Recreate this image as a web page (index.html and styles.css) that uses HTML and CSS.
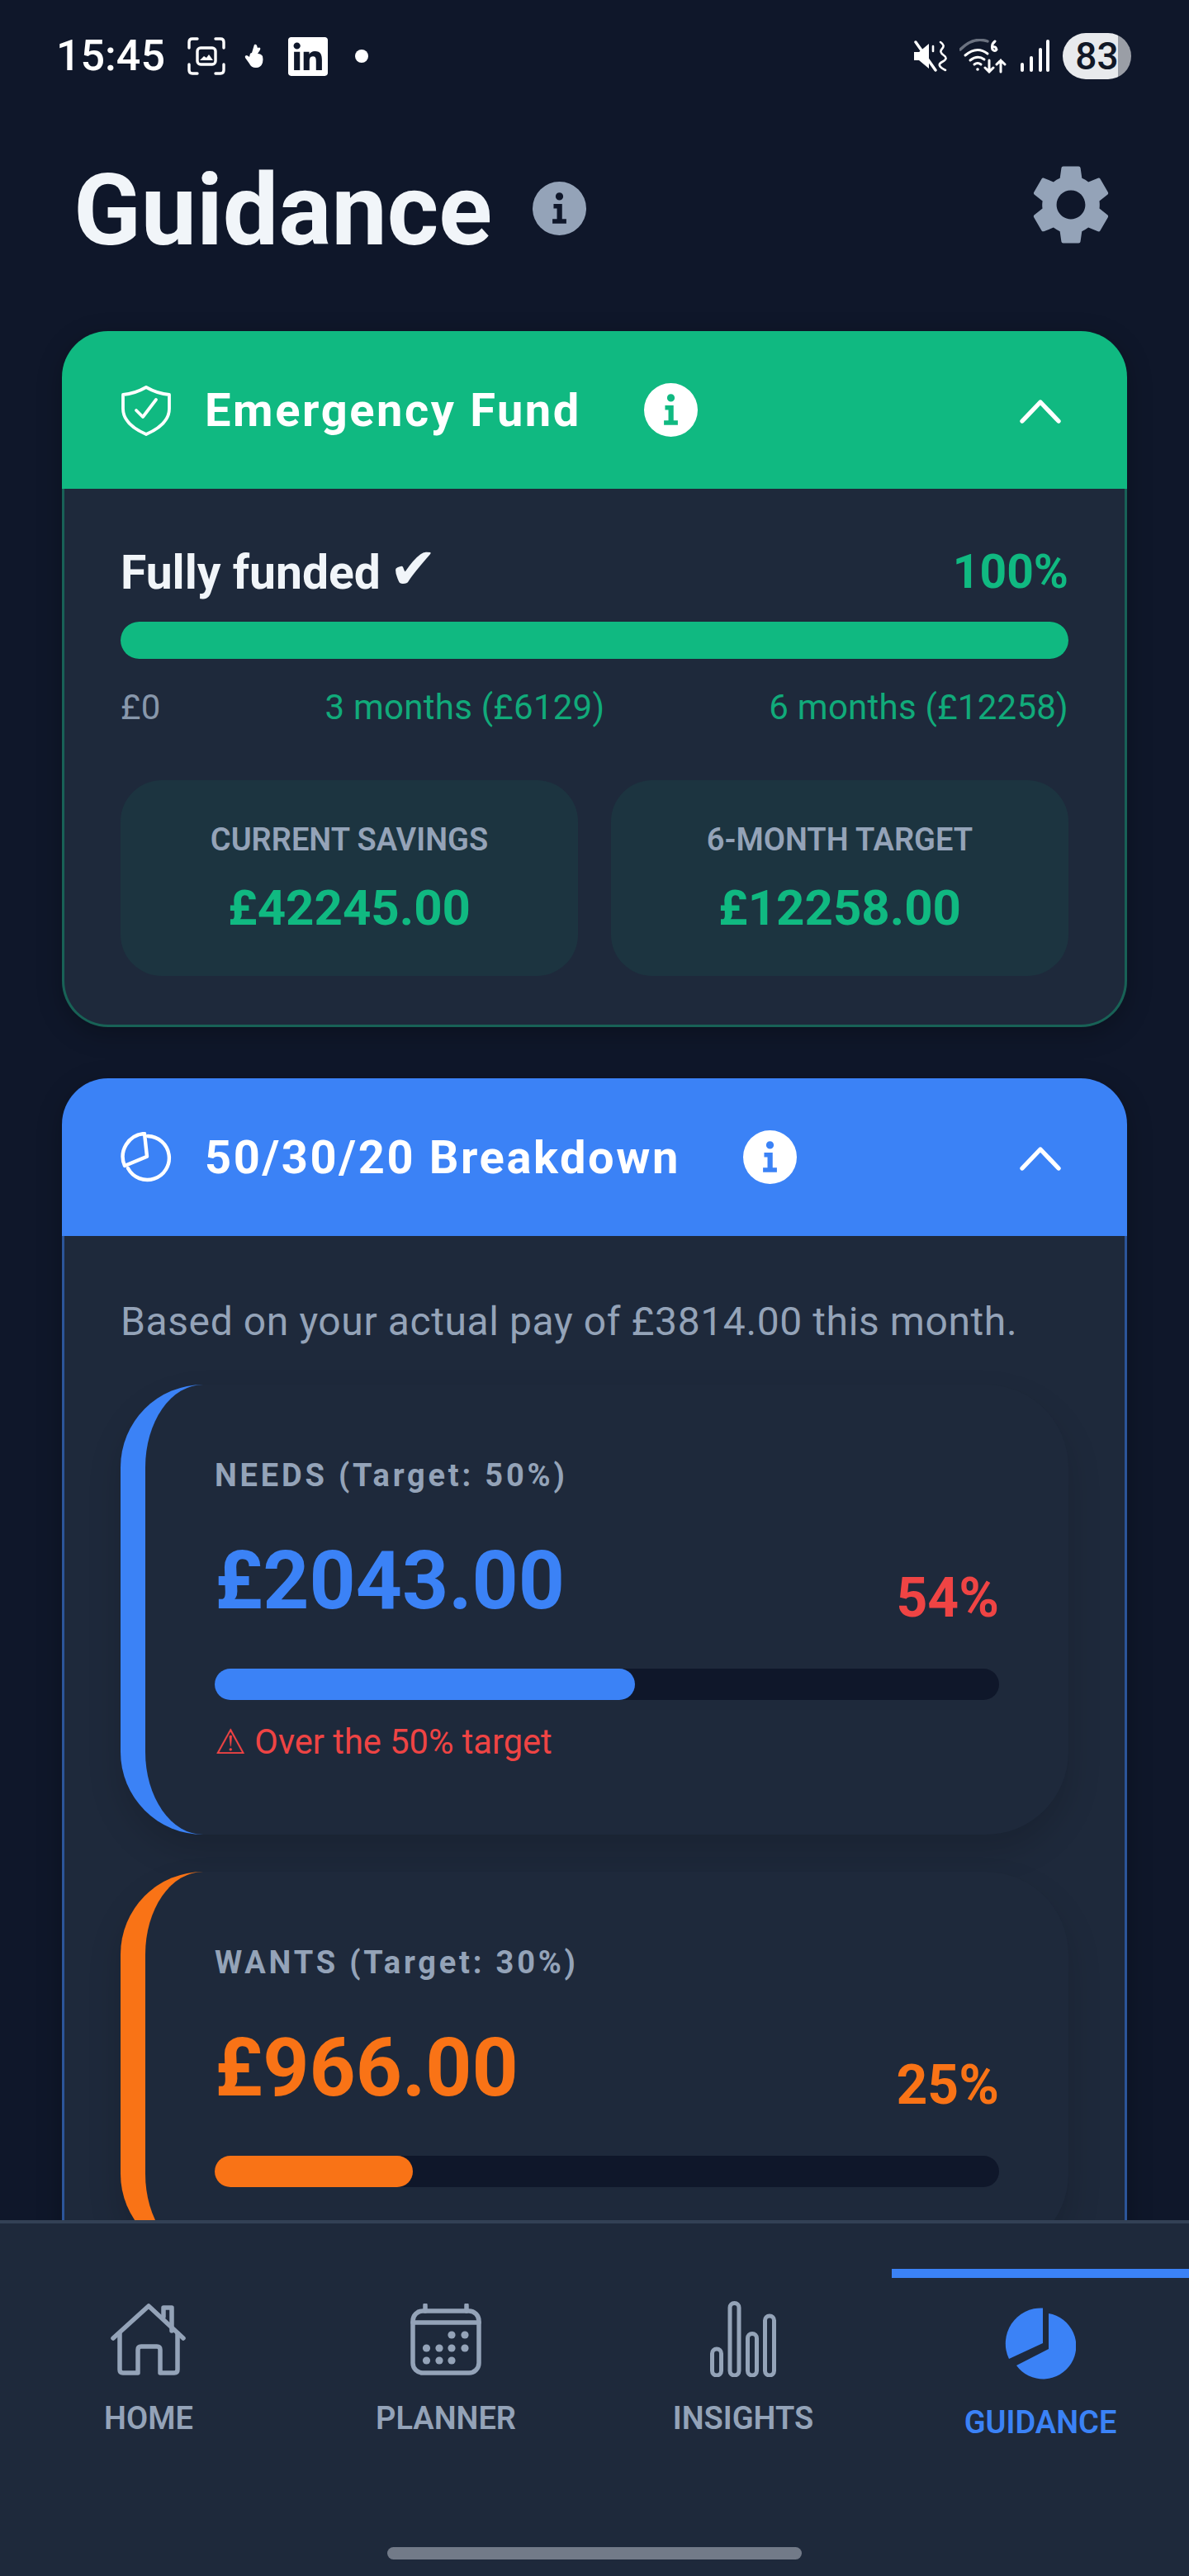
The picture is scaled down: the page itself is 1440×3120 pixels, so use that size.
FILE: index.html
```html
<!DOCTYPE html>
<html lang="en">
<head>
    <meta charset="UTF-8">
    <meta name="viewport" content="width=device-width, initial-scale=1.0">
    <title>Guidance</title>
    <link rel="stylesheet" href="styles.css">
</head>
<body>
    <svg class="defs" width="0" height="0">
        <symbol id="info" viewBox="0 0 24 24">
            <path fill-rule="evenodd" d="M12 0a12 12 0 1 0 0 24a12 12 0 1 0 0-24zM12 4.9a1.7 1.7 0 1 1 0 3.4a1.7 1.7 0 1 1 0-3.4zM9.4 10H13.2V16.7H15.1V18.7H8.9V16.7H10.9V12H9.4z"/>
        </symbol>
    </svg>

    <div class="phone">
        <div class="status-bar">
            <span class="time">15:45</span>
            <svg class="st-icon" width="46" height="46" viewBox="0 0 46 46" fill="none" stroke="#fff" stroke-width="3.4" stroke-linecap="round">
                <path d="M2 13V6q0-4 4-4h6M34 2h6q4 0 4 4v7M44 33v7q0 4-4 4h-6M12 44H6q-4 0-4-4v-7"/>
                <rect x="12" y="13" width="22" height="20" rx="4"/>
                <path d="M15 28l5-5 3 2 3-4 5 7z" fill="#fff" stroke="none"/>
            </svg>
            <svg class="st-icon st-hand" width="26" height="30" viewBox="0 0 26 30" fill="#fff">
                <path d="M12 1q2-1 3 1l1 3q2-1 3 0 1 1-1 4l-2 3q4 0 6 3 1 4 0 8-2 6-8 6-6 0-8-5L1 17q-1-2 1-3 2 0 4 2l1-4q1-1 2-1z"/>
            </svg>
            <svg class="st-icon" width="48" height="47" viewBox="0 0 24 24" preserveAspectRatio="none" fill="#fff">
                <path fill-rule="evenodd" d="M20.447 20.452h-3.554v-5.569c0-1.328-.027-3.037-1.852-3.037-1.853 0-2.136 1.445-2.136 2.939v5.667H9.351V9h3.414v1.561h.046c.477-.9 1.637-1.85 3.37-1.85 3.601 0 4.267 2.37 4.267 5.455v6.286zM5.337 7.433c-1.144 0-2.063-.926-2.063-2.065 0-1.138.92-2.063 2.063-2.063 1.14 0 2.064.925 2.064 2.063 0 1.139-.925 2.065-2.064 2.065zm1.782 13.019H3.555V9h3.564v11.452zM22.225 0H1.771C.792 0 0 .774 0 1.729v20.542C0 23.227.792 24 1.771 24h20.451C23.2 24 24 23.227 24 22.271V1.729C24 .774 23.2 0 22.222 0h.003z"/>
            </svg>
            <span class="st-dot"></span>

            <div class="status-right">
                <svg width="41" height="38" viewBox="0 0 41 38" fill="none" stroke="#fff" stroke-linecap="round">
                    <path d="M1 14h6L19 4v30L7 24H1z" fill="#fff" stroke="none"/>
                    <path d="M3 2l24 34" stroke-width="3.4"/>
                    <path d="M28 2q6 4 2 8t2 8-2 8 4 10" stroke-width="2.6" transform="translate(5 0)"/>
                    <path d="M24 7v6" stroke-width="2.6"/>
                </svg>
                <svg width="58" height="42" viewBox="0 0 58 42" fill="none" stroke="#fff" stroke-width="3" stroke-linecap="round">
                    <path d="M1 13Q17-3 34 3" stroke="#6b7280" stroke-width="3.4"/>
                    <path d="M7 20q14-12 27-2M13 26q9-7 17-1M18 31q4-3 8 0"/>
                    <circle cx="22" cy="37" r="1.8" fill="#fff" stroke="none"/>
                    <path d="M43 3q-5 4-3 10 3 3 5 0-1-4-5-3M36 26v14M31 35l5 5 5-5M50 40V26M45 31l5-5 5 5"/>
                </svg>
                <svg width="37" height="40" viewBox="0 0 37 40" stroke="#fff" stroke-width="4" stroke-linecap="round">
                    <path d="M3 30v7M14 22v15M25 12v25M34 2v35"/>
                </svg>
                <div class="battery">83</div>
            </div>
        </div>

        <div class="scroll">
            <div class="title-row">
                <h1>Guidance</h1>
                <svg class="title-info"><use href="#info"/></svg>
                <svg class="gear" viewBox="0 0 24 24">
                    <path d="M19.14 12.94c.04-.3.06-.61.06-.94 0-.32-.02-.64-.07-.94l2.03-1.58a.49.49 0 0 0 .12-.61l-1.92-3.32a.488.488 0 0 0-.59-.22l-2.39.96c-.5-.38-1.03-.7-1.62-.94l-.36-2.54a.484.484 0 0 0-.48-.41h-3.84c-.24 0-.43.17-.47.41l-.36 2.54c-.59.24-1.13.57-1.62.94l-2.39-.96c-.22-.08-.47 0-.59.22L2.74 8.87c-.12.21-.08.47.12.61l2.03 1.58c-.05.3-.09.63-.09.94s.02.64.07.94l-2.03 1.58a.49.49 0 0 0-.12.61l1.92 3.32c.12.22.37.29.59.22l2.39-.96c.5.38 1.03.7 1.62.94l.36 2.54c.05.24.24.41.48.41h3.84c.24 0 .44-.17.47-.41l.36-2.54c.59-.24 1.13-.56 1.62-.94l2.39.96c.22.08.47 0 .59-.22l1.92-3.32c.12-.22.07-.47-.12-.61l-2.01-1.58zM12 15.6c-1.98 0-3.6-1.62-3.6-3.6s1.62-3.6 3.6-3.6 3.6 1.62 3.6 3.6-1.62 3.6-3.6 3.6z"/>
                </svg>
            </div>

            <!-- Emergency Fund -->
            <div class="card card-green">
                <div class="card-header">
                    <svg class="head-icon" viewBox="0 0 62 62" fill="none" stroke="#fff" stroke-width="3.8" stroke-linecap="round" stroke-linejoin="round">
                        <path d="M31 3Q45 11 59 12V29C59 43 47 53 31 60C15 53 3 43 3 29V12Q17 11 31 3Z"/>
                        <path d="M19 31l8 8 16-21"/>
                    </svg>
                    <span class="card-title">Emergency Fund</span>
                    <svg class="head-info"><use href="#info"/></svg>
                    <svg class="chevron" viewBox="0 0 60 36" fill="none" stroke="#fff" stroke-width="5.4" stroke-linecap="round" stroke-linejoin="round">
                        <path d="M8 31L30 8l22 23"/>
                    </svg>
                </div>
                <div class="card-body fund-body">
                    <div class="fund-row">
                        <span class="fund-status">Fully funded <span class="tick">✔</span></span>
                        <span class="fund-pct">100%</span>
                    </div>
                    <div class="fund-track"><div class="fund-fill"></div></div>
                    <div class="fund-scale">
                        <span class="scale-zero">£0</span>
                        <span>3 months (£6129)</span>
                        <span>6 months (£12258)</span>
                    </div>
                    <div class="stats">
                        <div class="stat">
                            <div class="stat-label">CURRENT SAVINGS</div>
                            <div class="stat-value">£42245.00</div>
                        </div>
                        <div class="stat">
                            <div class="stat-label">6-MONTH TARGET</div>
                            <div class="stat-value">£12258.00</div>
                        </div>
                    </div>
                </div>
            </div>

            <!-- Breakdown -->
            <div class="card card-blue">
                <div class="card-header">
                    <svg class="head-icon" viewBox="0 0 62 62" fill="none" stroke="#fff" stroke-width="4.4" stroke-linejoin="round" stroke-linecap="round">
                        <path d="M29 2A28 28 0 0 0 5 41L32 29.7z"/>
                        <path d="M33 5A26.5 26.5 0 1 1 9 44"/>
                    </svg>
                    <span class="card-title">50/30/20 Breakdown</span>
                    <svg class="head-info"><use href="#info"/></svg>
                    <svg class="chevron" viewBox="0 0 60 36" fill="none" stroke="#fff" stroke-width="5.4" stroke-linecap="round" stroke-linejoin="round">
                        <path d="M8 31L30 8l22 23"/>
                    </svg>
                </div>
                <div class="card-body breakdown-body">
                    <p class="based">Based on your actual pay of £3814.00 this month.</p>

                    <div class="bucket bucket-needs">
                        <div class="bucket-label">NEEDS (Target: 50%)</div>
                        <div class="bucket-row">
                            <span class="bucket-value">£2043.00</span>
                            <span class="bucket-pct pct-over">54%</span>
                        </div>
                        <div class="bucket-track"><div class="bucket-fill" style="width: 53.6%"></div></div>
                        <div class="bucket-warn">⚠ Over the 50% target</div>
                    </div>

                    <div class="bucket bucket-wants">
                        <div class="bucket-label">WANTS (Target: 30%)</div>
                        <div class="bucket-row">
                            <span class="bucket-value">£966.00</span>
                            <span class="bucket-pct">25%</span>
                        </div>
                        <div class="bucket-track"><div class="bucket-fill" style="width: 25.3%"></div></div>
                    </div>
                </div>
            </div>
        </div>

        <div class="bottom-nav">
            <div class="tabs">
                <div class="tab">
                    <div class="tab-icon">
                        <svg width="92" height="87" viewBox="0 0 92 87" fill="none" stroke="#94a3b8" stroke-width="5.5" stroke-linecap="round" stroke-linejoin="round">
                            <path d="M3 42L46 3l42 39"/>
                            <path d="M11 36V80q0 4 4 4H33V56q0-4 4-4H56q4 0 4 4V84H77q4 0 4-4V36"/>
                            <path d="M64 16V5H74V33"/>
                        </svg>
                    </div>
                    <div class="tab-label">HOME</div>
                </div>
                <div class="tab">
                    <div class="tab-icon">
                        <svg width="86" height="87" viewBox="0 0 86 87" fill="none" stroke="#94a3b8" stroke-width="5.5" stroke-linecap="round">
                            <rect x="3" y="9" width="80" height="75" rx="12"/>
                            <path d="M3 23H83M18 2v7M68 2v7"/>
                            <g fill="#94a3b8" stroke="none">
                                <circle cx="50" cy="38" r="4.6"/><circle cx="66" cy="38" r="4.6"/>
                                <circle cx="19.5" cy="54" r="4.6"/><circle cx="35" cy="54" r="4.6"/><circle cx="50" cy="54" r="4.6"/><circle cx="66" cy="54" r="4.6"/>
                                <circle cx="19.5" cy="69" r="4.6"/><circle cx="35" cy="69" r="4.6"/><circle cx="50" cy="69" r="4.6"/>
                            </g>
                        </svg>
                    </div>
                    <div class="tab-label">PLANNER</div>
                </div>
                <div class="tab">
                    <div class="tab-icon">
                        <svg width="80" height="92" viewBox="0 0 80 92" fill="none" stroke="#94a3b8" stroke-width="5">
                            <rect x="2.5" y="58" width="11" height="32" rx="5.5"/>
                            <rect x="24" y="2.5" width="11" height="87.5" rx="5.5"/>
                            <rect x="45.5" y="39.5" width="11" height="50.5" rx="5.5"/>
                            <rect x="66.5" y="18" width="11" height="72" rx="5.5"/>
                        </svg>
                    </div>
                    <div class="tab-label">INSIGHTS</div>
                </div>
                <div class="tab active">
                    <div class="tab-icon">
                        <svg width="86" height="87" viewBox="0 0 86 87" fill="#3b82f6">
                            <path d="M46 .5A43 43 0 0 0 5 62L46 43z"/>
                            <path d="M53 7A40 40 0 1 1 14 70L53 50z"/>
                        </svg>
                    </div>
                    <div class="tab-label">GUIDANCE</div>
                </div>
            </div>
            <div class="home-bar"></div>
        </div>
    </div>
</body>
</html>
```

FILE: styles.css
```css
* {
    margin: 0;
    padding: 0;
    box-sizing: border-box;
    font-family: Roboto, "Liberation Sans", sans-serif;
}

body {
    background-color: #0f172a;
}

.defs {
    display: block;
    height: 0;
}

.phone {
    width: 1440px;
    height: 3120px;
    display: flex;
    flex-direction: column;
    overflow: hidden;
    background-color: #0f172a;
}

/* status bar */
.status-bar {
    height: 136px;
    flex-shrink: 0;
    display: flex;
    align-items: center;
    gap: 27px;
    padding: 0 70px 0 68px;
    color: white;
}

.time {
    font-size: 52px;
    font-weight: 500;
    line-height: 60px;
}

.st-icon {
    flex-shrink: 0;
}

.st-hand {
    margin-left: -4px;
}

.st-dot {
    width: 16px;
    height: 16px;
    margin-left: 6px;
    border-radius: 50%;
    background-color: white;
}

.status-right {
    margin-left: auto;
    display: flex;
    align-items: center;
    gap: 15px;
}

.battery {
    width: 83px;
    height: 56px;
    border-radius: 28px;
    background: linear-gradient(90deg, #e8eaed 81%, #9a9ea6 81%);
    color: #111827;
    font-size: 46px;
    font-weight: 500;
    line-height: 56px;
    text-align: center;
}

/* header */
.scroll {
    flex: 1;
    min-height: 0;
    overflow: hidden;
    padding: 0 75px;
}

.title-row {
    height: 224px;
    margin-bottom: 41px;
    padding: 0 10px 0 14px;
    display: flex;
    align-items: center;
}

h1 {
    margin-top: 14px;
    font-size: 120px;
    font-weight: 700;
    line-height: 140px;
    color: #f1f5f9;
}

.title-info {
    width: 65px;
    height: 65px;
    margin-top: 8px;
    margin-left: 49px;
    fill: #94a3b8;
}

.gear {
    width: 116px;
    height: 116px;
    margin-left: auto;
    fill: #94a3b8;
}

/* cards */
.card {
    margin-bottom: 62px;
    border-radius: 56px;
    box-shadow: 0 8px 30px rgba(0, 0, 0, 0.25);
}

.card-header {
    height: 191px;
    display: flex;
    align-items: center;
    padding: 0 71px;
    border-radius: 56px 56px 0 0;
    color: white;
}

.card-green .card-header {
    background-color: #10b981;
}

.card-blue .card-header {
    background-color: #3b82f6;
}

.head-icon {
    width: 62px;
    height: 62px;
    margin-right: 40px;
    flex-shrink: 0;
}

.card-title {
    font-size: 56px;
    font-weight: 700;
    letter-spacing: 2.6px;
    line-height: 70px;
}

.head-info {
    width: 65px;
    height: 65px;
    margin-left: 76px;
    fill: white;
}

.chevron {
    width: 60px;
    height: 36px;
    margin-left: auto;
    margin-right: 4px;
}

.card-body {
    background-color: #1e293b;
    border: 3px solid;
    border-top: none;
    border-radius: 0 0 56px 56px;
    padding: 0 68px;
}

.card-green .card-body {
    border-color: rgba(16, 185, 129, 0.4);
}

.card-blue .card-body {
    border-color: rgba(59, 130, 246, 0.5);
}

/* emergency fund */
.fund-body {
    padding-top: 68px;
    padding-bottom: 59px;
}

.fund-row {
    display: flex;
    justify-content: space-between;
    align-items: center;
    height: 64px;
}

.fund-status {
    font-size: 57px;
    font-weight: 700;
    color: #f1f5f9;
}

.tick {
    margin-left: -4px;
    font-family: "DejaVu Sans", sans-serif;
    font-size: 70px;
    font-weight: 400;
    line-height: 64px;
}

.fund-pct {
    font-size: 57px;
    font-weight: 700;
    color: #10b981;
}

.fund-track {
    height: 45px;
    margin-top: 29px;
    border-radius: 23px;
    background-color: #0f172a;
}

.fund-fill {
    height: 100%;
    border-radius: 23px;
    background-color: #10b981;
}

.fund-scale {
    margin-top: 33px;
    display: flex;
    justify-content: space-between;
    font-size: 42px;
    line-height: 52px;
    letter-spacing: 0.25px;
    color: #10b981;
    opacity: 0.9;
}

.scale-zero {
    color: #94a3b8;
}

.stats {
    margin-top: 62px;
    display: grid;
    grid-template-columns: 1fr 1fr;
    gap: 40px;
}

.stat {
    height: 237px;
    padding-top: 50px;
    border-radius: 50px;
    background-color: rgba(16, 185, 129, 0.08);
    text-align: center;
}

.stat-label {
    font-size: 38px;
    font-weight: 600;
    line-height: 44px;
    color: #94a3b8;
}

.stat-value {
    margin-top: 26px;
    font-size: 60px;
    font-weight: 700;
    line-height: 70px;
    color: #10b981;
}

/* breakdown */
.breakdown-body {
    padding-top: 74px;
    padding-bottom: 60px;
}

.based {
    font-size: 48px;
    line-height: 60px;
    letter-spacing: 0.6px;
    color: #94a3b8;
    margin-bottom: 46px;
}

.bucket {
    padding: 84px;
    margin-bottom: 45px;
    border-left: 30px solid;
    border-radius: 100px;
    background-color: #1e293b;
    box-shadow: 0 20px 40px rgba(0, 0, 0, 0.15);
}

.bucket-needs {
    border-color: #3b82f6;
    color: #3b82f6;
    padding-bottom: 87px;
}

.bucket-wants {
    border-color: #f97316;
    color: #f97316;
}

.bucket-label {
    font-size: 38px;
    font-weight: 700;
    line-height: 52px;
    letter-spacing: 3.8px;
    color: #94a3b8;
}

.bucket-row {
    margin-top: 44px;
    display: flex;
    justify-content: space-between;
    align-items: flex-end;
}

.bucket-value {
    font-size: 98px;
    font-weight: 700;
    line-height: 115px;
}

.bucket-pct {
    font-size: 66px;
    font-weight: 700;
    line-height: 73px;
}

.pct-over {
    color: #ef4444;
}

.bucket-track {
    height: 38px;
    margin-top: 49px;
    border-radius: 19px;
    background-color: #0f172a;
}

.bucket-fill {
    height: 100%;
    border-radius: 19px;
    background-color: currentColor;
}

.bucket-warn {
    margin-top: 26px;
    font-size: 41.6px;
    line-height: 50px;
    color: #ef4444;
}

/* bottom nav */
.bottom-nav {
    height: 431px;
    flex-shrink: 0;
    display: flex;
    flex-direction: column;
    padding-top: 55px;
    background-color: #1e293b;
    border-top: 4px solid #334155;
}

.tabs {
    display: grid;
    grid-template-columns: repeat(4, 1fr);
}

.tab {
    padding-top: 39px;
    text-align: center;
    color: #94a3b8;
}

.tab.active {
    padding-top: 33px;
    border-top: 11px solid #3b82f6;
    color: #3b82f6;
}

.tab-icon {
    height: 92px;
    display: flex;
    align-items: center;
    justify-content: center;
}

.tab-label {
    margin-top: 25px;
    font-size: 38px;
    font-weight: 600;
    line-height: 50px;
}

.home-bar {
    width: 502px;
    height: 15px;
    margin: auto auto 20px;
    border-radius: 8px;
    background-color: #727a88;
}
```
